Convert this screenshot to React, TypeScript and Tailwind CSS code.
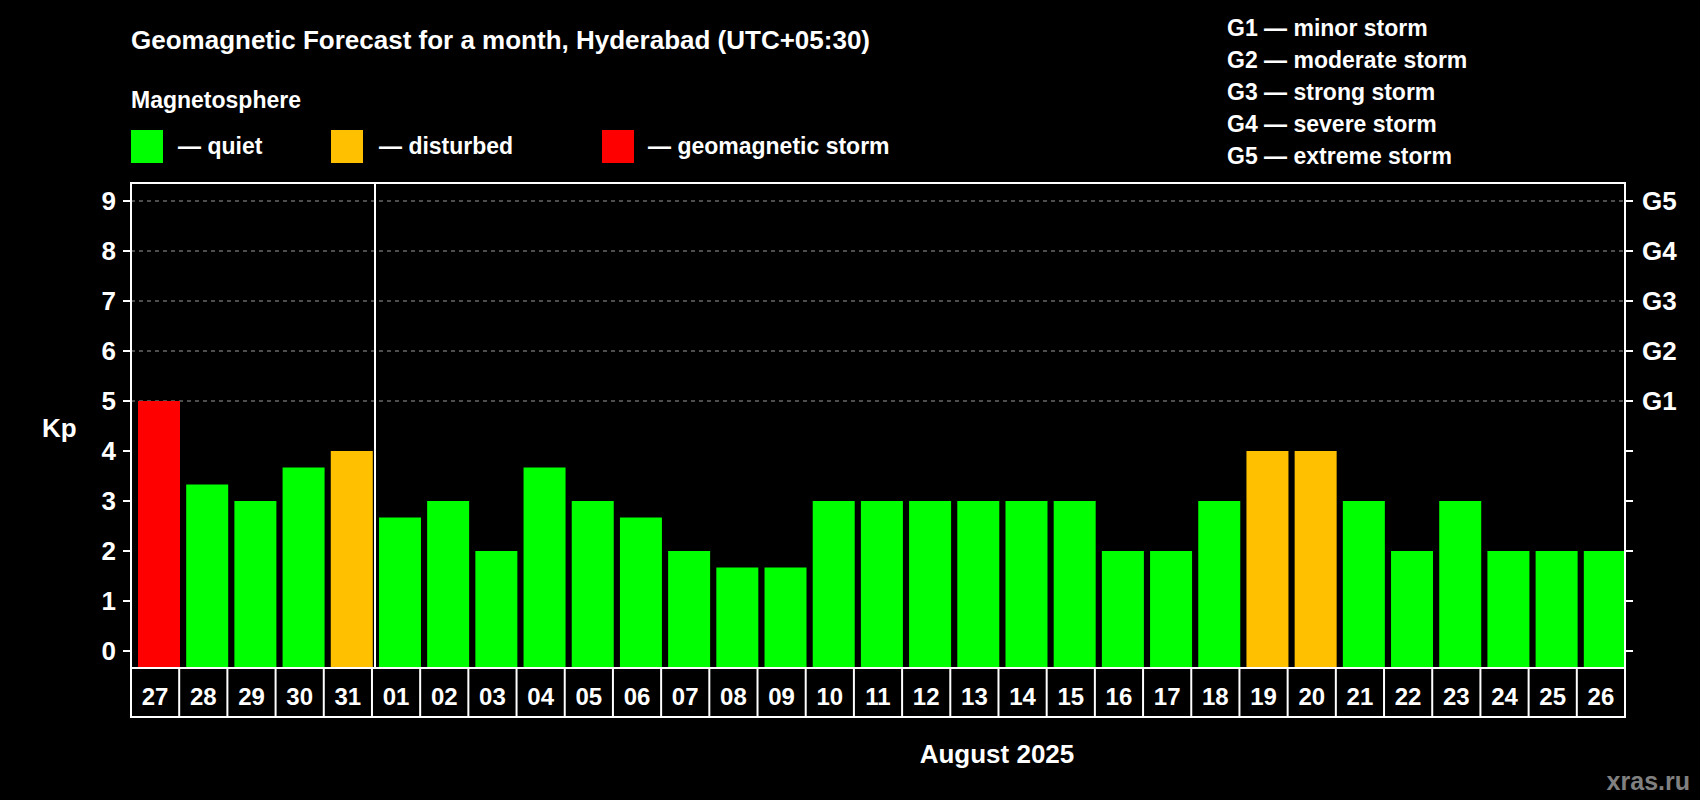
const days = ["27","28","29","30","31","01","02","03","04","05","06","07","08","09","10","11","12","13","14","15","16","17","18","19","20","21","22","23","24","25","26"];
const vals = [5,3.33,3,3.67,4,2.67,3,2,3.67,3,2.67,2,1.67,1.67,3,3,3,3,3,3,2,2,3,4,4,3,2,3,2,2,2];
const color = (v: number) => (v >= 5 ? "#ff0000" : v >= 4 ? "#ffc000" : "#00ff00");

export default function App() {
  const L = 131, R = 1625, T = 183, B = 668, LB = 717;
  const cw = (R - L) / 31;
  const y = (v: number) => 651 - 50 * v;
  return (
    <div className="w-[1700px] h-[800px] bg-black text-white overflow-hidden" style={{ fontFamily: '"Liberation Sans", Arial, sans-serif' }}>
      <div className="flex h-[175px]">
        <div className="pl-[131px] pt-[22px] w-[1227px]">
          <div className="text-[26px] font-bold leading-[36px]">Geomagnetic Forecast for a month, Hyderabad (UTC+05:30)</div>
          <div className="text-[23px] font-bold leading-[30px] mt-[27px]">Magnetosphere</div>
          <div className="flex items-center mt-[14px] text-[23px] font-bold">
            <div className="w-[32px] h-[33px] bg-[#00ff00]" />
            <span className="ml-[15px] w-[153px]">— quiet</span>
            <div className="w-[32px] h-[33px] bg-[#ffc000]" />
            <span className="ml-[16px] w-[223px]">— disturbed</span>
            <div className="w-[32px] h-[33px] bg-[#ff0000]" />
            <span className="ml-[14px]">— geomagnetic storm</span>
          </div>
        </div>
        <div className="pt-[12px] text-[23px] font-bold leading-[32px]">
          <div>G1 — minor storm</div>
          <div>G2 — moderate storm</div>
          <div>G3 — strong storm</div>
          <div>G4 — severe storm</div>
          <div>G5 — extreme storm</div>
        </div>
      </div>
      <svg width={1700} height={625} viewBox="0 175 1700 625" style={{ fontFamily: '"Liberation Sans", Arial, sans-serif', fontWeight: 700 }}>
        {[1,2,3,4,5,6,7,8,9].map(v => v >= 5 ? (
          <line key={"g"+v} x1={L} x2={R} y1={y(v)} y2={y(v)} stroke="#9a9a9a" strokeWidth={1} strokeDasharray="4 4" />
        ) : null)}
        {vals.map((v, i) => (
          <rect key={i} x={L + 7 + cw * i} y={y(v)} width={42} height={B - y(v)} fill={color(v)} />
        ))}
        <line x1={375} x2={375} y1={T} y2={B} stroke="white" strokeWidth={2} />
        <rect x={L} y={T} width={R - L} height={LB - T} fill="none" stroke="white" strokeWidth={2} />
        <line x1={L} x2={R} y1={B} y2={B} stroke="white" strokeWidth={2} />
        {days.map((d, i) => (
          <g key={d}>
            {i > 0 && <line x1={L + cw * i} x2={L + cw * i} y1={B} y2={LB} stroke="white" strokeWidth={2} />}
            <text x={L + cw * i + cw / 2} y={705} fill="white" fontSize={24} textAnchor="middle">{d}</text>
          </g>
        ))}
        {[0,1,2,3,4,5,6,7,8,9].map(v => (
          <g key={"t"+v}>
            <line x1={123} x2={L} y1={y(v)} y2={y(v)} stroke="white" strokeWidth={2} />
            <line x1={R} x2={1633} y1={y(v)} y2={y(v)} stroke="white" strokeWidth={2} />
            <text x={116} y={y(v) + 9} fill="white" fontSize={26} textAnchor="end">{v}</text>
            {v >= 5 && <text x={1642} y={y(v) + 9} fill="white" fontSize={26}>{"G" + (v - 4)}</text>}
          </g>
        ))}
        <text x={42} y={437} fill="white" fontSize={26}>Kp</text>
        <text x={997} y={763} fill="white" fontSize={26} textAnchor="middle">August 2025</text>
        <text x={1690} y={790} fill="#808080" fontSize={25} textAnchor="end">xras.ru</text>
      </svg>
    </div>
  );
}
